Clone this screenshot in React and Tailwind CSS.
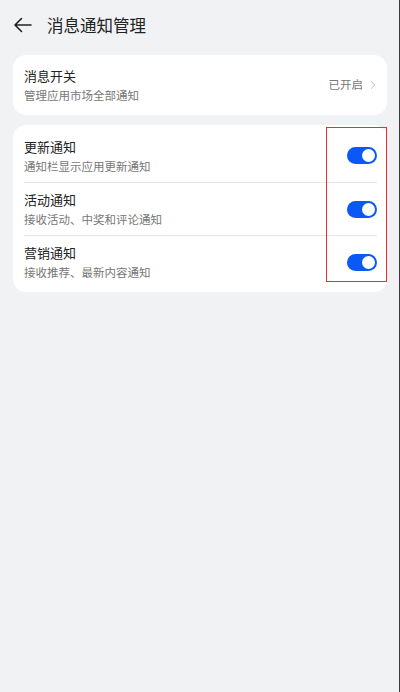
import { ChevronRight } from 'lucide-react';

const items = [
  { title: '更新通知', desc: '通知栏显示应用更新通知' },
  { title: '活动通知', desc: '接收活动、中奖和评论通知' },
  { title: '营销通知', desc: '接收推荐、最新内容通知' },
];

function Toggle() {
  return (
    <div className="w-[30px] h-[17px] rounded-full bg-[#0a59f7] flex items-center justify-end pr-[2px]">
      <div className="w-[13px] h-[13px] rounded-full bg-white" />
    </div>
  );
}

export default function App() {
  return (
    <div
      className="relative w-[400px] h-[692px] bg-[#f1f2f4] overflow-hidden"
      style={{ fontFamily: '"Noto Sans CJK SC", "Noto Sans", sans-serif' }}
    >
      <div className="flex items-center h-[50px] pl-[13px]">
        <svg width="19" height="16" viewBox="0 0 19 16" fill="none" stroke="#222" strokeWidth="1.6" strokeLinecap="round" strokeLinejoin="round">
          <path d="M18 8H2M8.5 1.5L2 8l6.5 6.5" />
        </svg>
        <h1 className="ml-[15px] text-[16.5px] text-[#222] leading-none">消息通知管理</h1>
      </div>

      <div className="mx-[13px] mt-[5px] bg-white rounded-[13px] h-[60px] flex items-center pl-[11px] pr-[7px]">
        <div className="flex-1">
          <div className="text-[13px] text-[#222] leading-[20px]">消息开关</div>
          <div className="text-[11.5px] text-[#777] leading-[17px] mt-[1px]">管理应用市场全部通知</div>
        </div>
        <span className="text-[11.5px] text-[#777]">已开启</span>
        <ChevronRight size={14} strokeWidth={1.3} className="text-[#aaa] ml-[3px]" />
      </div>

      <div className="relative mx-[13px] mt-[10px] bg-white rounded-[13px] py-[4px] pl-[11px] pr-[10px]">
        {items.map((it, i) => (
          <div key={it.title} className={`flex items-center h-[53px] ${i > 0 ? 'border-t border-[#e6e6e6]' : ''}`}>
            <div className="flex-1">
              <div className="text-[13px] text-[#222] leading-[20px]">{it.title}</div>
              <div className="text-[11.5px] text-[#777] leading-[17px] mt-[1px]">{it.desc}</div>
            </div>
            <Toggle />
          </div>
        ))}
        <div className="absolute top-[2px] right-0 w-[61px] h-[155px] border border-solid border-[color:#e8302f] pointer-events-none" />
      </div>

      <div className="absolute top-0 right-0 w-px h-full bg-[#3a3a3a]" />
    </div>
  );
}
